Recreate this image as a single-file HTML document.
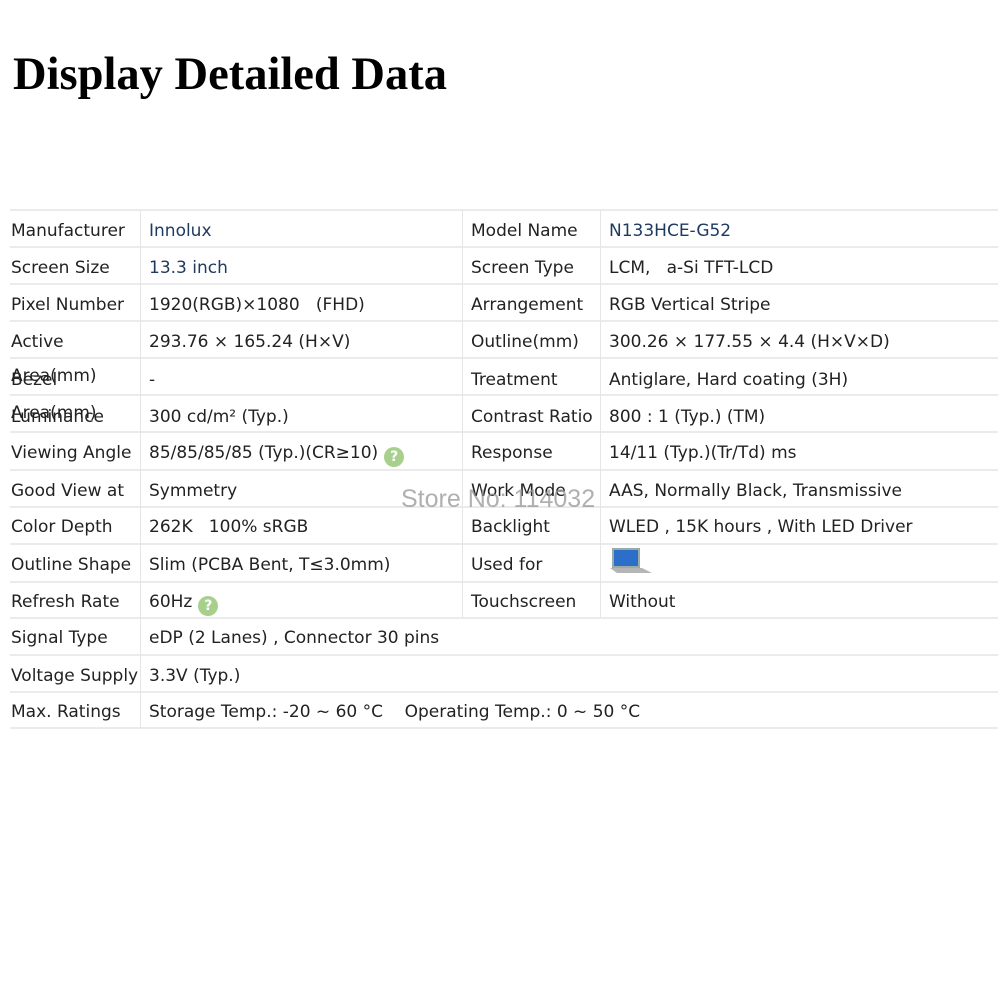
<!DOCTYPE html>
<html><head><meta charset="utf-8"><style>
body{margin:0;width:1000px;height:1000px;background:#fff;position:relative;overflow:hidden;font-family:"DejaVu Sans","Liberation Sans",sans-serif;color:#222}
h1{position:absolute;left:13px;top:48px;margin:0;font:bold 46.5px "Liberation Serif",serif;color:#000;white-space:nowrap}
.hl{position:absolute;left:10px;width:988px;height:2px;background:#ebebeb}
.vl{position:absolute;width:1px;background:#e6e6e6}
.t{position:absolute;font-size:17px;white-space:nowrap;line-height:20px;margin-top:2px}
.b{color:#1f3a60}
.q{display:inline-block;width:20px;height:20px;border-radius:50%;background:#a8d08d;color:#fff;font-size:14px;text-align:center;line-height:20px;font-weight:bold;vertical-align:-3px;margin-left:6px}
.wm{position:absolute;left:401px;top:485px;font:25px "Liberation Sans",sans-serif;color:rgba(150,150,150,.75)}
</style></head><body>
<h1>Display Detailed Data</h1>
<div class="hl" style="top:209px"></div>
<div class="hl" style="top:246px"></div>
<div class="hl" style="top:283px"></div>
<div class="hl" style="top:320px"></div>
<div class="hl" style="top:357px"></div>
<div class="hl" style="top:394px"></div>
<div class="hl" style="top:431px"></div>
<div class="hl" style="top:469px"></div>
<div class="hl" style="top:506px"></div>
<div class="hl" style="top:543px"></div>
<div class="hl" style="top:581px"></div>
<div class="hl" style="top:617px"></div>
<div class="hl" style="top:654px"></div>
<div class="hl" style="top:691px"></div>
<div class="hl" style="top:727px"></div>
<div class="vl" style="left:140px;top:210px;height:518px"></div>
<div class="vl" style="left:462px;top:210px;height:408px"></div>
<div class="vl" style="left:600px;top:210px;height:408px"></div>

<div class="t" style="left:11px;top:219px">Manufacturer</div><div class="t b" style="left:149px;top:219px">Innolux</div>
<div class="t" style="left:471px;top:219px">Model Name</div><div class="t b" style="left:609px;top:219px">N133HCE-G52</div>

<div class="t" style="left:11px;top:256px">Screen Size</div><div class="t b" style="left:149px;top:256px">13.3 inch</div>
<div class="t" style="left:471px;top:256px">Screen Type</div><div class="t" style="left:609px;top:256px">LCM,&nbsp;&nbsp; a-Si TFT-LCD</div>

<div class="t" style="left:11px;top:293px">Pixel Number</div><div class="t" style="left:149px;top:293px">1920(RGB)×1080&nbsp;&nbsp; (FHD)</div>
<div class="t" style="left:471px;top:293px">Arrangement</div><div class="t" style="left:609px;top:293px">RGB Vertical Stripe</div>

<div class="t" style="left:11px;top:330px">Active</div><div class="t" style="left:149px;top:330px">293.76 × 165.24 (H×V)</div>
<div class="t" style="left:471px;top:330px">Outline(mm)</div><div class="t" style="left:609px;top:330px">300.26 × 177.55 × 4.4 (H×V×D)</div>

<div class="t" style="left:11px;top:364px">Area(mm)</div><div class="t" style="left:11px;top:368px">Bezel</div><div class="t" style="left:149px;top:368px">-</div>
<div class="t" style="left:471px;top:368px">Treatment</div><div class="t" style="left:609px;top:368px">Antiglare, Hard coating (3H)</div>

<div class="t" style="left:11px;top:401px">Area(mm)</div><div class="t" style="left:11px;top:405px">Luminance</div><div class="t" style="left:149px;top:405px">300 cd/m² (Typ.)</div>
<div class="t" style="left:471px;top:405px">Contrast Ratio</div><div class="t" style="left:609px;top:405px">800 : 1 (Typ.) (TM)</div>

<div class="t" style="left:11px;top:441px">Viewing Angle</div><div class="t" style="left:149px;top:441px">85/85/85/85 (Typ.)(CR≥10)<span class="q">?</span></div>
<div class="t" style="left:471px;top:441px">Response</div><div class="t" style="left:609px;top:441px">14/11 (Typ.)(Tr/Td) ms</div>

<div class="t" style="left:11px;top:479px">Good View at</div><div class="t" style="left:149px;top:479px">Symmetry</div>
<div class="t" style="left:471px;top:479px">Work Mode</div><div class="t" style="left:609px;top:479px">AAS, Normally Black, Transmissive</div>

<div class="t" style="left:11px;top:515px">Color Depth</div><div class="t" style="left:149px;top:515px">262K&nbsp;&nbsp; 100% sRGB</div>
<div class="t" style="left:471px;top:515px">Backlight</div><div class="t" style="left:609px;top:515px">WLED , 15K hours , With LED Driver</div>

<div class="t" style="left:11px;top:553px">Outline Shape</div><div class="t" style="left:149px;top:553px">Slim (PCBA Bent, T≤3.0mm)</div>
<div class="t" style="left:471px;top:553px">Used for</div>
<svg style="position:absolute;left:609px;top:546px" width="44" height="30"><path d="M3 2h28v20H3z" fill="#9aa"/><path d="M5 4h24v16H5z" fill="#2d6ec9"/><path d="M1 22h32l10 5H8z" fill="#b5b5b5"/></svg>

<div class="t" style="left:11px;top:590px">Refresh Rate</div><div class="t" style="left:149px;top:590px">60Hz<span class="q">?</span></div>
<div class="t" style="left:471px;top:590px">Touchscreen</div><div class="t" style="left:609px;top:590px">Without</div>

<div class="t" style="left:11px;top:626px">Signal Type</div><div class="t" style="left:149px;top:626px">eDP (2 Lanes) , Connector 30 pins</div>
<div class="t" style="left:11px;top:664px">Voltage Supply</div><div class="t" style="left:149px;top:664px">3.3V (Typ.)</div>
<div class="t" style="left:11px;top:700px">Max. Ratings</div><div class="t" style="left:149px;top:700px">Storage Temp.: -20 ~ 60 °C&nbsp;&nbsp;&nbsp; Operating Temp.: 0 ~ 50 °C</div>

<div class="wm">Store No: 114032</div>
</body></html>
